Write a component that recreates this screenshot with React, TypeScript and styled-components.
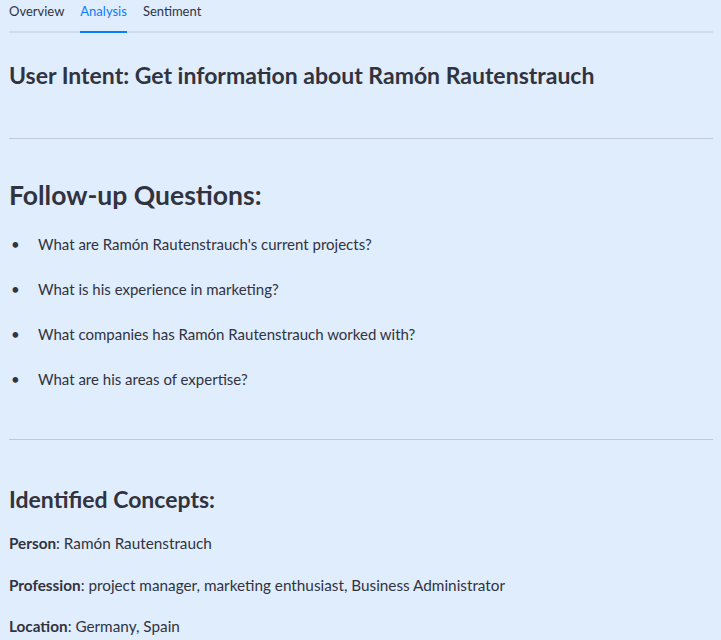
import styled, { createGlobalStyle } from "styled-components";

const GlobalStyle = createGlobalStyle`
  html, body {
    margin: 0;
    padding: 0;
    background: #e0edfd;
  }
  body {
    font-family: "Lato", "Open Sans", sans-serif;
    color: #31333f;
  }
  * {
    box-sizing: border-box;
  }
`;

const tabs = ["Overview", "Analysis", "Sentiment"];

const questions = [
  "What are Ramón Rautenstrauch's current projects?",
  "What is his experience in marketing?",
  "What companies has Ramón Rautenstrauch worked with?",
  "What are his areas of expertise?",
];

const concepts = [
  { label: "Person", value: "Ramón Rautenstrauch" },
  {
    label: "Profession",
    value: "project manager, marketing enthusiast, Business Administrator",
  },
  { label: "Location", value: "Germany, Spain" },
];

const App = () => {
  return (
    <Page>
      <GlobalStyle />
      <TabBar>
        {tabs.map((t) => (
          <Tab key={t} $active={t === "Analysis"}>
            {t}
          </Tab>
        ))}
      </TabBar>

      <IntentTitle>User Intent: Get information about Ramón Rautenstrauch</IntentTitle>
      <Divider />

      <SectionTitle>Follow-up Questions:</SectionTitle>
      <QuestionList>
        {questions.map((q) => (
          <li key={q}>{q}</li>
        ))}
      </QuestionList>
      <Divider $top={49} />

      <ConceptTitle>Identified Concepts:</ConceptTitle>
      {concepts.map((c) => (
        <ConceptRow key={c.label}>
          <strong>{c.label}</strong>: {c.value}
        </ConceptRow>
      ))}
    </Page>
  );
};

const Page = styled.div`
  padding: 0 8px 0 9px;
  width: 721px;
  min-height: 640px;
`;

const TabBar = styled.div`
  display: flex;
  gap: 16px;
  border-bottom: 2px solid #cfdcec;
  height: 33px;
`;

const Tab = styled.div<{ $active?: boolean }>`
  font-size: 13px;
  line-height: 23px;
  color: ${(p) => (p.$active ? "#0a7cff" : "#31333f")};
  border-bottom: 2px solid ${(p) => (p.$active ? "#0a7cff" : "transparent")};
  margin-bottom: -2px;
  cursor: pointer;
`;

const IntentTitle = styled.h3`
  margin: 0;
  padding: 27px 0 0;
  font-size: 23px;
  font-weight: 700;
  line-height: 30px;
`;

const Divider = styled.hr<{ $top?: number }>`
  border: none;
  border-top: 1px solid #c0cad6;
  margin: ${(p) => p.$top ?? 48}px 0 0;
  width: 704px;
`;

const SectionTitle = styled.h2`
  margin: 0;
  padding: 38px 0 0;
  font-size: 26.5px;
  font-weight: 700;
  line-height: 36px;
`;

const QuestionList = styled.ul`
  margin: 0;
  padding: 20px 0 0 0;
  list-style: none;
  font-size: 15px;
  line-height: 22px;

  li {
    display: flex;
    margin-bottom: 23px;
  }
  li::before {
    content: "•";
    width: 27px;
    padding-left: 2px;
    flex-shrink: 0;
  }
  li:last-child {
    margin-bottom: 0;
  }
`;

const ConceptTitle = styled.h3`
  margin: 0;
  padding: 43px 0 0;
  font-size: 23px;
  font-weight: 700;
  line-height: 32px;
`;

const ConceptRow = styled.p`
  margin: 17px 0 0;
  font-size: 15.3px;
  line-height: 22px;

  & + & {
    margin-top: 19.5px;
  }

  strong {
    font-weight: 700;
  }
`;

export default App;
